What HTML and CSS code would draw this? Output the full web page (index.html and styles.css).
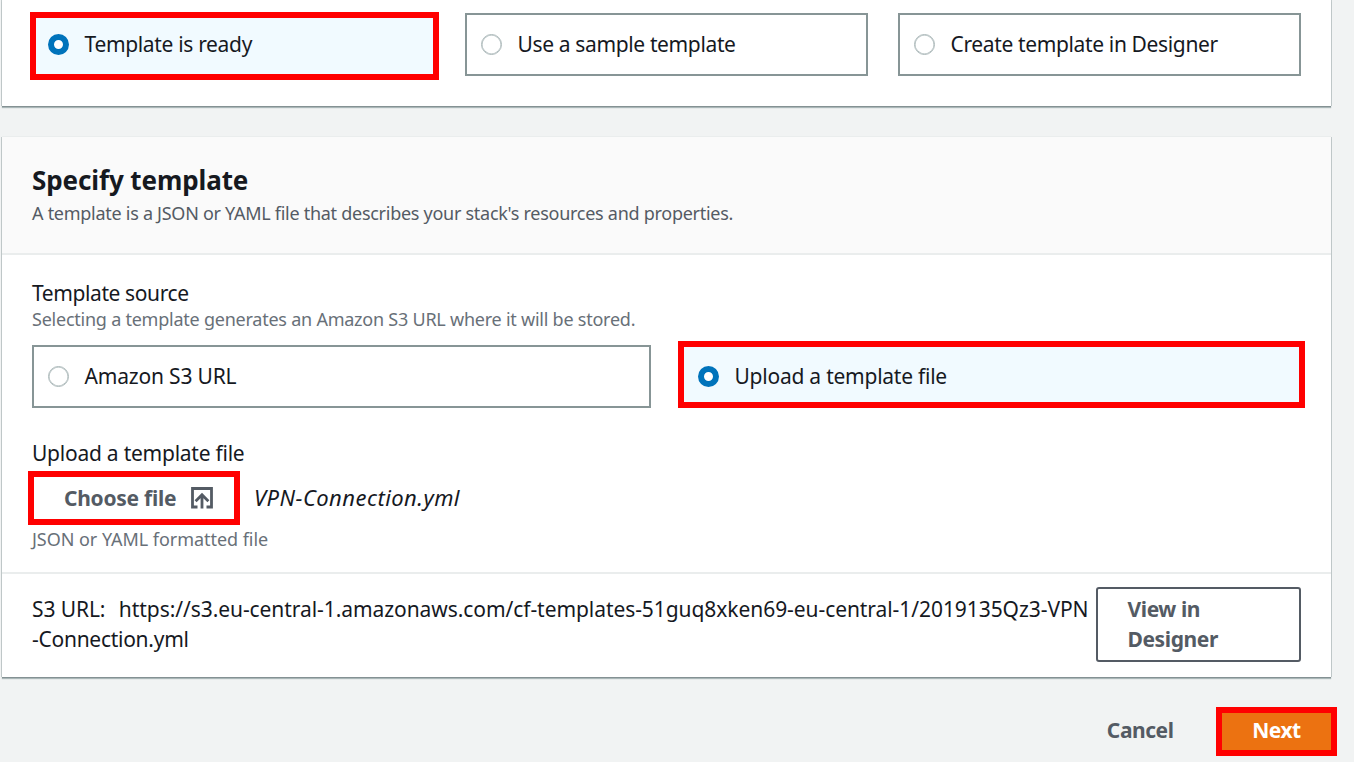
FILE: index.html
```
<!DOCTYPE html>
<html lang="en">
<head>
<meta charset="utf-8">
<title>Create stack</title>
<link rel="stylesheet" href="styles.css">
</head>
<body>
<main class="page">
  <section class="panel prepare">
    <div class="tiles three">
      <label class="tile selected mark-ready"><span class="radio on"></span><span class="t-ready">Template is ready</span></label>
      <label class="tile"><span class="radio"></span><span class="t-sample">Use a sample template</span></label>
      <label class="tile"><span class="radio"></span><span class="t-sample">Create template in Designer</span></label>
    </div>
  </section>

  <section class="panel specify">
    <header class="head">
      <h2>Specify template</h2>
      <p class="desc">A template is a JSON or YAML file that describes your stack's resources and properties.</p>
    </header>
    <div class="body">
      <div class="label t-source">Template source</div>
      <div class="hint t-select">Selecting a template generates an Amazon S3 URL where it will be stored.</div>
      <div class="tiles two">
        <label class="tile"><span class="radio"></span><span class="t-s3">Amazon S3 URL</span></label>
        <label class="tile selected mark-upload"><span class="radio on"></span><span class="t-upload">Upload a template file</span></label>
      </div>
      <div class="label upload-label t-upload">Upload a template file</div>
      <div class="file-row">
        <button class="choose"><span class="t-choose">Choose file</span>
          <svg class="icon" viewBox="0 0 22 22" fill="none" stroke="currentColor" stroke-width="2.8">
            <path d="M6.5 20H1.5V1.5H20.5V20H15.5"/>
            <path d="M11 21.4V8.5M4.6 14.2L11 7.8L17.4 14.2"/>
          </svg>
        </button>
        <em class="filename">VPN-Connection.yml</em>
      </div>
      <div class="hint format">JSON or YAML formatted file</div>
    </div>
    <footer class="url-row">
      <div class="url"><span class="t-s3url">S3 URL:</span><span class="t-url">https://s3.eu-central-1.amazonaws.com/cf-templates-51guq8xken69-eu-central-1/2019135Qz3-VPN</span><br><span class="t-conn">-Connection.yml</span></div>
      <button class="view">View in<br>Designer</button>
    </footer>
  </section>

  <div class="actions">
    <button class="cancel">Cancel</button>
    <button class="next">Next</button>
  </div>
</main>
</body>
</html>
```
FILE: styles.css
```
* { box-sizing: border-box; }
body {
  margin: 0;
  height: 762px;
  overflow: hidden;
  background: #f1f3f3;
  color: #16191f;
  font: 21px/30px "Noto Sans", sans-serif;
  white-space: nowrap;
}
h2, p { margin: 0; }
button { font: inherit; font-weight: 700; color: #545b64; background: none; border: 0; padding: 0; margin: 0; }
.page { width: 1329px; margin-left: 2px; }
.panel {
  background: #fff;
  box-shadow: 0 1px 0 #849193, 0 2px 1px #aab7b8, 1px 0 0 #c3cbcc, -1px 0 0 #c3cbcc, 0 -1px 0 #eaeded;
}
.prepare { height: 106px; padding: 13px 30px 0; margin-bottom: 31px; }
.tiles { display: grid; gap: 30px; }
.three { grid-template-columns: repeat(3, 403px); }
.two { grid-template-columns: repeat(2, 619px); gap: 31px; margin-top: 15px; }
.tile {
  position: relative;
  display: flex;
  align-items: center;
  gap: 15.5px;
  height: 63px;
  padding-left: 14px;
  border: 2px solid #879596;
}
.tile span + span { padding-bottom: 2px; }
.selected { background: #f1faff; }
.selected::after { content: ""; position: absolute; border: 6px solid #f00; }
.mark-ready::after { inset: -3px -6px -6px -4px; }
.mark-upload::after { inset: -6px -6px -2px -6px; }
.radio { width: 21px; height: 21px; border: 1.5px solid #aab7b8; border-radius: 50%; background: #fff; box-shadow: inset 0 0 0 0.5px #aab7b8; }
.radio.on { border: 6.5px solid #0073bb; box-shadow: none; }

.t-ready { letter-spacing: -0.33px; }
.t-sample { letter-spacing: -0.36px; }
.t-source { letter-spacing: -0.4px; }
.t-select { letter-spacing: -0.236px; }
.t-s3 { letter-spacing: -0.18px; }
.t-upload { letter-spacing: -0.24px; }
.t-choose { letter-spacing: -0.27px; }
.t-s3url { letter-spacing: -0.1px; }
.t-conn { letter-spacing: -0.27px; }

.specify { height: 540px; }
.head { height: 118px; padding: 25px 30px 0; background: #fafafa; border-bottom: 2px solid #eaeded; }
.head h2 { font-size: 26px; line-height: 36px; letter-spacing: -0.1px; }
.desc { font-size: 18px; line-height: 30px; color: #545b64; letter-spacing: -0.276px; }
.body { height: 317px; padding: 23px 30px 0; }
.hint { font-size: 18px; line-height: 22px; color: #687078; }
.upload-label { margin-top: 30px; }
.file-row { display: flex; gap: 14px; margin: 3px 0 0 -4px; align-items: center; }
.choose { display: flex; align-items: center; width: 212px; height: 54px; border: 6px solid #f00; padding-left: 30px; gap: 15px; }
.icon { width: 22px; height: 22px; }
.filename { font-size: 22px; letter-spacing: 0.46px; padding-bottom: 2px; }
.format { margin-top: 3px; letter-spacing: -0.04px; }
.url-row { display: flex; justify-content: space-between; border-top: 2px solid #eaeded; height: 105px; padding: 13px 30px 0; }
.url { padding-top: 7px; }
.t-url { margin-left: 13.5px; letter-spacing: -0.067px; }
.view { width: 205px; height: 75px; border: 2px solid #545b64; border-radius: 3px; text-align: left; padding: 0 0 2px 29.5px; letter-spacing: -0.4px; }
.actions { display: flex; justify-content: flex-end; align-items: center; margin: 30px -6px 0 0; }
.cancel { margin-right: 42.5px; padding-bottom: 4px; letter-spacing: -0.45px; }
.next { width: 121px; height: 49px; color: #fff; background: #ec7211; border: 6px solid #f00; padding-bottom: 3px; letter-spacing: -0.5px; }
```
